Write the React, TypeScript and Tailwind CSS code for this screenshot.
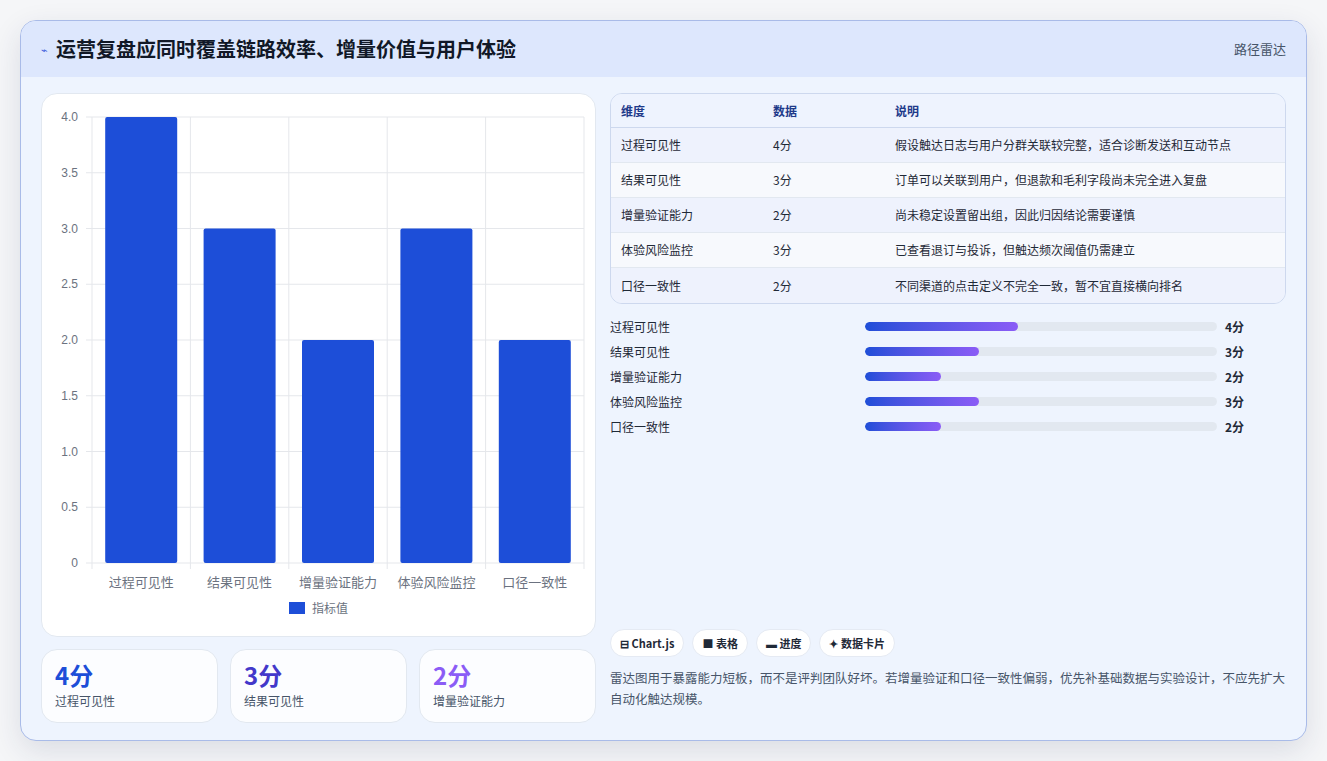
const font = { fontFamily: '"Noto Sans CJK SC", "Noto Sans", sans-serif' };

const rows = [
  { name: "过程可见性", v: 4, note: "假设触达日志与用户分群关联较完整，适合诊断发送和互动节点", w: 153 },
  { name: "结果可见性", v: 3, note: "订单可以关联到用户，但退款和毛利字段尚未完全进入复盘", w: 114 },
  { name: "增量验证能力", v: 2, note: "尚未稳定设置留出组，因此归因结论需要谨慎", w: 76 },
  { name: "体验风险监控", v: 3, note: "已查看退订与投诉，但触达频次阈值仍需建立", w: 114 },
  { name: "口径一致性", v: 2, note: "不同渠道的点击定义不完全一致，暂不宜直接横向排名", w: 76 },
];

function Chart() {
  const left = 50, right = 542, top = 23, bottom = 469;
  const h = bottom - top;
  const cw = (right - left) / 5;
  const ticks = [0, 0.5, 1, 1.5, 2, 2.5, 3, 3.5, 4];
  return (
    <svg width="555" height="544" viewBox="0 0 555 544" className="block">
      {ticks.map((t) => {
        const y = bottom - (t / 4) * h;
        return (
          <g key={t}>
            <line x1={left - 6} x2={right} y1={y} y2={y} stroke="#e5e7eb" />
            <text x={left - 14} y={y + 4} textAnchor="end" fontSize="12" fill="#6b7280" style={{ fontFamily: '"Liberation Sans", sans-serif' }}>
              {t === 0 ? "0" : t.toFixed(1)}
            </text>
          </g>
        );
      })}
      {[0, 1, 2, 3, 4, 5].map((i) => (
        <line key={i} x1={left + i * cw} x2={left + i * cw} y1={top} y2={bottom + 6} stroke="#e5e7eb" />
      ))}
      {rows.map((r, i) => {
        const bh = (r.v / 4) * h;
        const x = left + i * cw + (cw - 72) / 2;
        return (
          <g key={r.name}>
            <rect x={x} y={bottom - bh} width="72" height={bh} rx="2" fill="#1d4ed8" />
            <text x={left + i * cw + cw / 2} y={bottom + 24} textAnchor="middle" fontSize="13" fill="#6b7280" style={font}>
              {r.name}
            </text>
          </g>
        );
      })}
      <rect x="247" y="508" width="16" height="12" fill="#1d4ed8" />
      <text x="270" y="519" fontSize="12" fill="#6b7280" style={font}>指标值</text>
    </svg>
  );
}

export default function App() {
  return (
    <div className="min-h-[761px] bg-[#f5f6f8] pt-5 pl-5" style={font}>
      <div className="w-[1287px] h-[721px] rounded-2xl border border-[#a9bbe8] bg-[#eef4fe] overflow-hidden shadow-[0_10px_30px_rgba(30,41,80,0.12)] flex flex-col">
        <div className="h-[56px] bg-[#dde7fd] flex items-center justify-between px-5">
          <div className="flex items-center gap-2">
            <span className="text-[11px] text-[#3b5bdb]">⌁</span>
            <span className="text-[20px] font-bold text-[#111827]">运营复盘应同时覆盖链路效率、增量价值与用户体验</span>
          </div>
          <span className="text-[13px] text-[#475569]">路径雷达</span>
        </div>
        <div className="flex gap-[14px] px-5 pt-4">
          <div className="w-[555px] flex flex-col gap-3">
            <div className="h-[544px] rounded-2xl bg-white border border-[#e2e8f0]">
              <Chart />
            </div>
            <div className="grid grid-cols-3 gap-3">
              {[
                { v: "4分", l: "过程可见性", c: "text-[#1d4ed8]" },
                { v: "3分", l: "结果可见性", c: "text-[#4338ca]" },
                { v: "2分", l: "增量验证能力", c: "text-[#8b5cf6]" },
              ].map((s) => (
                <div key={s.l} className="h-[74px] rounded-2xl bg-white/80 border border-[#e2e8f0] px-[13px] pt-[10px]">
                  <div className={`text-[24px] font-bold leading-[30px] ${s.c}`}>{s.v}</div>
                  <div className="text-[12px] text-[#475569] mt-[2px]">{s.l}</div>
                </div>
              ))}
            </div>
          </div>
          <div className="w-[678px] flex flex-col">
            <div className="rounded-xl border border-[#cdd8ee] overflow-hidden text-[12px]">
              <div className="h-[34px] flex items-center bg-[#eef3fe] border-b border-[#cdd8ee] font-bold text-[#1e3a8a]">
                <span className="w-[162px] pl-[10px]">维度</span>
                <span className="w-[122px]">数据</span>
                <span>说明</span>
              </div>
              {rows.map((r, i) => (
                <div key={r.name} className={`h-[35px] flex items-center text-[#1f2937] ${i % 2 === 0 ? "bg-[#eef2fd]" : "bg-[#f7f9fd]"} ${i < 4 ? "border-b border-[#e2e8f0]" : ""}`}>
                  <span className="w-[162px] pl-[10px]">{r.name}</span>
                  <span className="w-[122px]">{r.v}分</span>
                  <span>{r.note}</span>
                </div>
              ))}
            </div>
            <div className="mt-[10px] flex flex-col">
              {rows.map((r) => (
                <div key={r.name} className="h-[25px] flex items-center text-[12px] text-[#1f2937]">
                  <span className="w-[255px]">{r.name}</span>
                  <div className="w-[352px] h-[9px] rounded-full bg-[#e2e8f0] overflow-hidden">
                    <div className="h-full rounded-full bg-gradient-to-r from-[#1d4ed8] to-[#8b5cf6]" style={{ width: r.w }} />
                  </div>
                  <span className="ml-2 font-bold">{r.v}分</span>
                </div>
              ))}
            </div>
            <div className="mt-auto flex gap-[8px] mb-[10px]">
              {["⊟ Chart.js", "■ 表格", "▬ 进度", "✦ 数据卡片"].map((c) => (
                <span key={c} className="h-[28px] px-[9px] flex items-center rounded-full bg-white border border-[#e5eaf3] text-[11px] font-bold text-[#1f2937]">{c}</span>
              ))}
            </div>
            <p className="text-[12.5px] leading-[21px] text-[#475569] mb-[14px]">
              雷达图用于暴露能力短板，而不是评判团队好坏。若增量验证和口径一致性偏弱，优先补基础数据与实验设计，不应先扩大自动化触达规模。
            </p>
          </div>
        </div>
      </div>
    </div>
  );
}
